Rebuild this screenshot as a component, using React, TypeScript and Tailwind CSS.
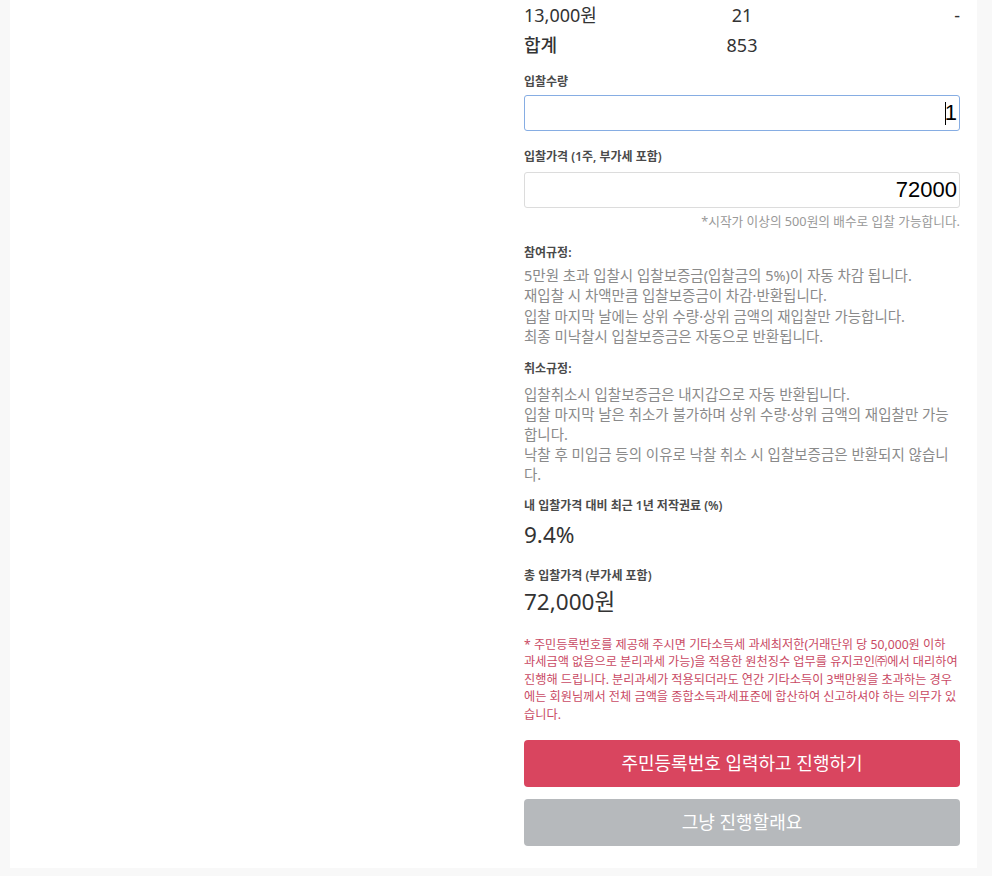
import React from "react";

const KR = { fontFamily: '"Noto Sans", "Noto Sans CJK KR", sans-serif' };
const ARIAL = { fontFamily: '"Liberation Sans", Arial, sans-serif' };

function Label({ children, className = "" }: { children: React.ReactNode; className?: string }) {
  return (
    <div className={"text-[12px] leading-[18px] font-semibold text-[#4a4a4a] " + className}>{children}</div>
  );
}

const noteLines = [
  "* 주민등록번호를 제공해 주시면 기타소득세 과세최저한(거래단위 당 50,000원 이하",
  "과세금액 없음으로 분리과세 가능)을 적용한 원천징수 업무를 유지코인㈜에서 대리하여",
  "진행해 드립니다. 분리과세가 적용되더라도 연간 기타소득이 3백만원을 초과하는 경우",
  "에는 회원님께서 전체 금액을 종합소득과세표준에 합산하여 신고하셔야 하는 의무가 있",
  "습니다.",
];

export default function App() {
  return (
    <div className="w-[992px] h-[876px] bg-[#f8f8f8] pl-[10px] overflow-hidden" style={KR}>
      <div className="w-[967px] h-[868px] bg-white flex">
        <div className="w-[514px] shrink-0" />
        <div className="w-[436px] flex flex-col">
          {/* table rows */}
          <div className="grid grid-cols-3 h-[30px] items-center text-[18px] text-[#333]">
            <div>13,000원</div>
            <div className="text-center">21</div>
            <div className="text-right">-</div>
          </div>
          <div className="grid grid-cols-3 h-[30px] items-center text-[18px] text-[#333]">
            <div className="font-medium">합계</div>
            <div className="text-center">853</div>
            <div />
          </div>

          <Label className="mt-[13px]">입찰수량</Label>
          <div className="relative mt-[4px]">
            <input
              readOnly
              value="1"
              className="w-full h-[36px] border border-[#86ade3] rounded-[3px] text-right text-[22px] text-black pr-[2px] outline-none"
              style={ARIAL}
            />
            <span className="absolute right-[14px] top-[7px] w-px h-[23px] bg-black" />
          </div>

          <Label className="mt-[17px]">입찰가격 (1주, 부가세 포함)</Label>
          <input
            readOnly
            value="72000"
            className="mt-[6px] w-full h-[36px] border border-[#dcdcdc] rounded-[3px] text-right text-[22px] text-black pr-[2px] outline-none"
            style={ARIAL}
          />
          <div className="mt-[4px] text-right text-[12.7px] leading-[18px] text-[#999]">
            *시작가 이상의 500원의 배수로 입찰 가능합니다.
          </div>

          <Label className="mt-[14px]">참여규정:</Label>
          <div className="mt-[3px] text-[14.5px] leading-[20.4px] text-[#8a8a8a]">
            <div>5만원 초과 입찰시 입찰보증금(입찰금의 5%)이 자동 차감 됩니다.</div>
            <div>재입찰 시 차액만큼 입찰보증금이 차감·반환됩니다.</div>
            <div>입찰 마지막 날에는 상위 수량·상위 금액의 재입찰만 가능합니다.</div>
            <div>최종 미낙찰시 입찰보증금은 자동으로 반환됩니다.</div>
          </div>

          <Label className="mt-[13px]">취소규정:</Label>
          <div className="mt-[6px] text-[14.5px] leading-[20px] text-[#8a8a8a]">
            <div>입찰취소시 입찰보증금은 내지갑으로 자동 반환됩니다.</div>
            <div>입찰 마지막 날은 취소가 불가하며 상위 수량·상위 금액의 재입찰만 가능합니다.</div>
            <div>낙찰 후 미입금 등의 이유로 낙찰 취소 시 입찰보증금은 반환되지 않습니다.</div>
          </div>

          <Label className="mt-[13px]">내 입찰가격 대비 최근 1년 저작권료 (%)</Label>
          <div className="mt-[5px] text-[22.5px] leading-[30px] text-[#333]">9.4%</div>

          <Label className="mt-[17px]">총 입찰가격 (부가세 포함)</Label>
          <div className="mt-[2px] text-[22.5px] leading-[30px] text-[#333]">72,000원</div>

          <div className="mt-[19px] text-[12.2px] leading-[17.5px] text-[#c94a64]">
            {noteLines.map((l) => (
              <div key={l} className="whitespace-nowrap">{l}</div>
            ))}
          </div>

          <button className="mt-[17px] h-[47px] w-full rounded-[4px] bg-[#d9455f] text-white text-[18px]">
            주민등록번호 입력하고 진행하기
          </button>
          <button className="mt-[12px] h-[47px] w-full rounded-[4px] bg-[#b6b9bc] text-white text-[18px]">
            그냥 진행할래요
          </button>
        </div>
      </div>
    </div>
  );
}
